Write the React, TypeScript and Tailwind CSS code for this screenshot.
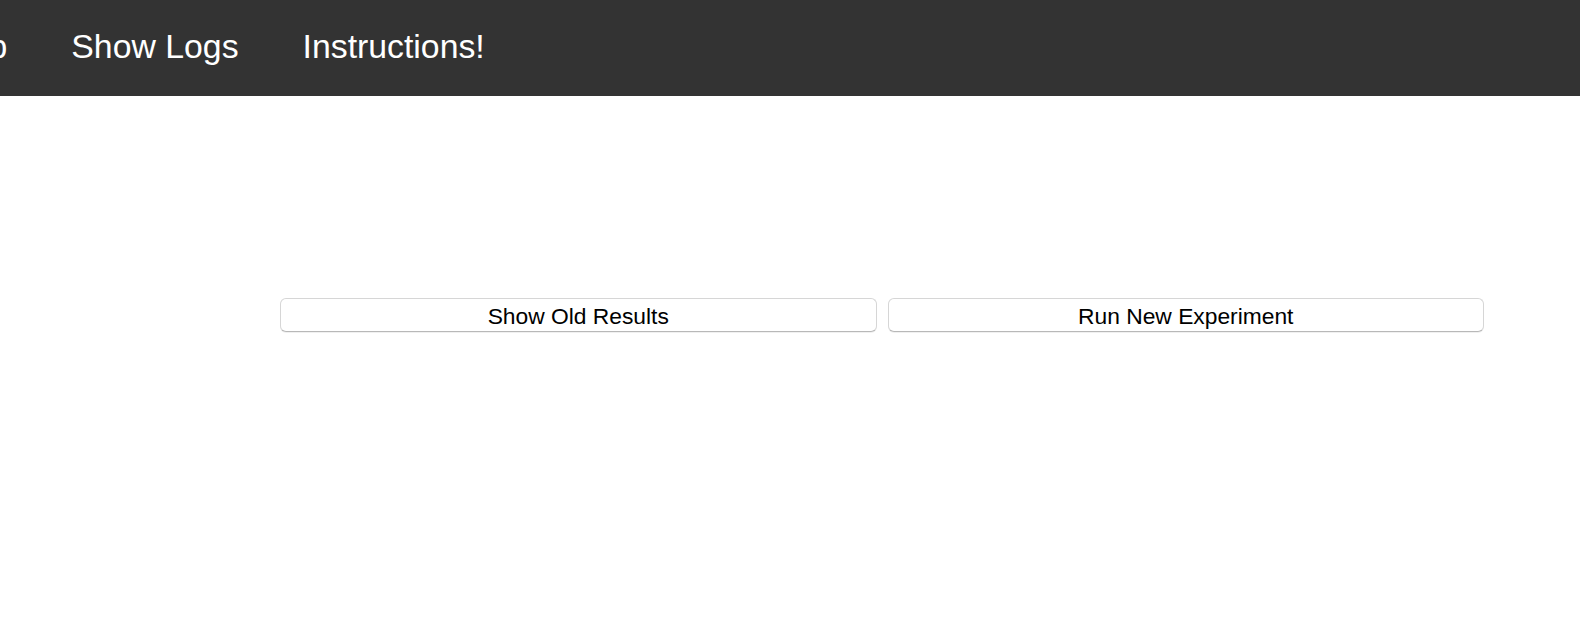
export default function App() {
  return (
    <div className="min-h-screen bg-white overflow-hidden" style={{ fontFamily: '"Liberation Sans", Arial, sans-serif' }}>
      {/* Top nav */}
      <nav className="h-[96px] bg-[#333333] flex items-center overflow-hidden">
        <div className="flex items-center text-white text-[33.8px] leading-none whitespace-nowrap -ml-[113px] -mt-[2px]">
          <a className="px-[32px]">Setup</a>
          <a className="px-[32px]">Show Logs</a>
          <a className="px-[32px]">Instructions!</a>
        </div>
      </nav>

      {/* Actions */}
      <div className="pt-[202px] pl-[280px] flex gap-[11px] w-[1484px]">
        <button className="flex-1 h-[34px] rounded-[6px] border border-[#d6d6d6] border-b-[#b8b8b8] bg-white text-black text-[22.8px] leading-none pt-[3px] shadow-[0_1px_0_rgba(0,0,0,0.06)]">
          Show Old Results
        </button>
        <button className="flex-1 h-[34px] rounded-[6px] border border-[#d6d6d6] border-b-[#b8b8b8] bg-white text-black text-[22.8px] leading-none pt-[3px] shadow-[0_1px_0_rgba(0,0,0,0.06)]">
          Run New Experiment
        </button>
      </div>
    </div>
  )
}
